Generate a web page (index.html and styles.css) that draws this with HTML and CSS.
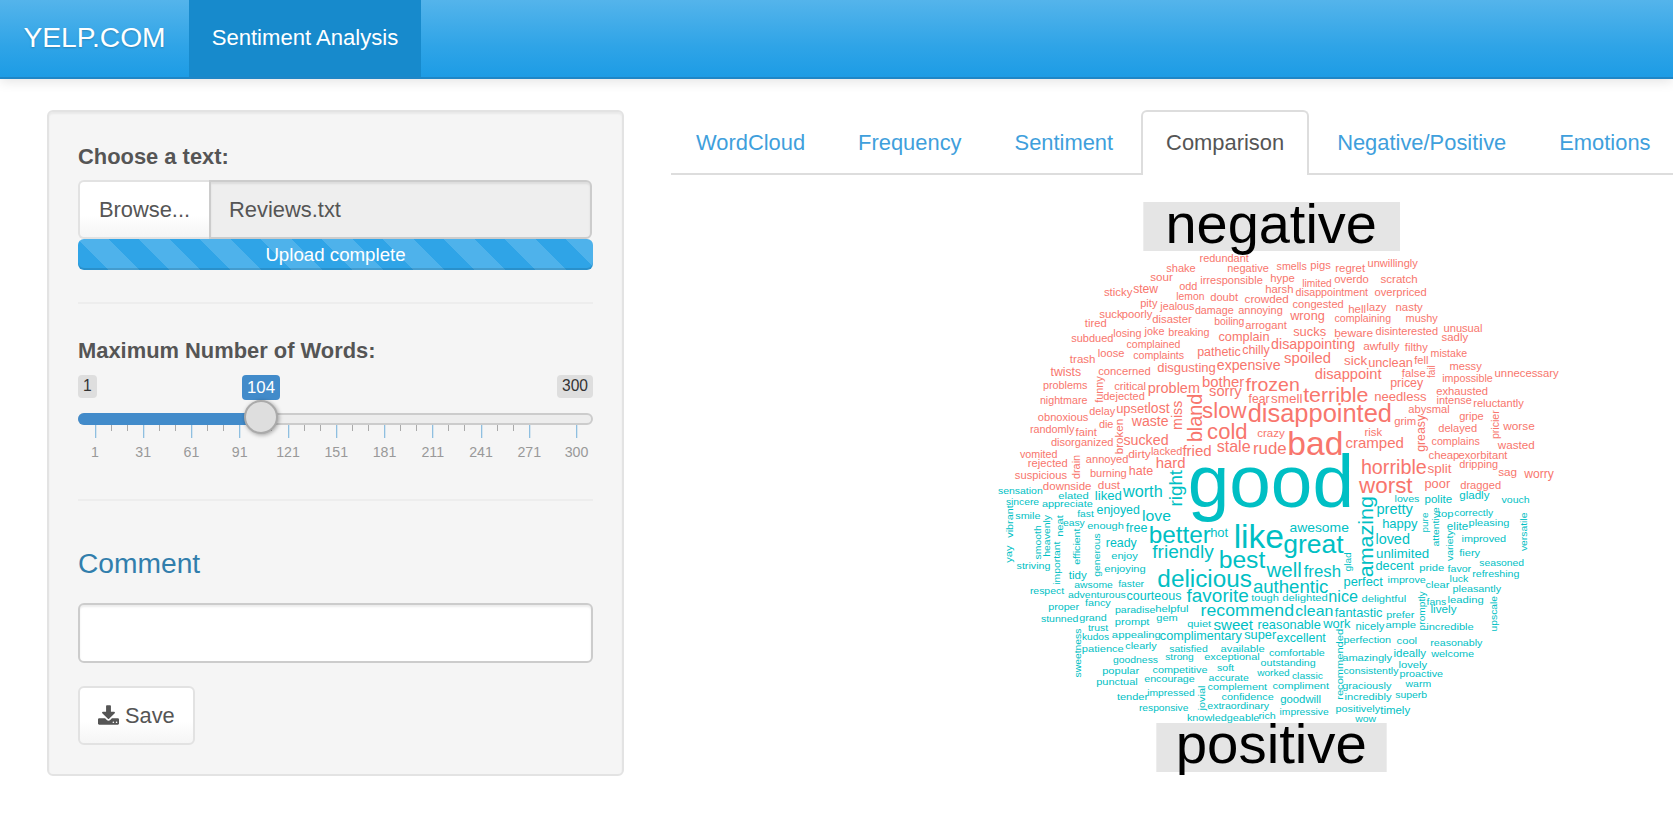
FILE: index.html
```html
<!DOCTYPE html>
<html lang="en">
<head>
<meta charset="utf-8">
<title>Sentiment Analysis</title>
<link rel="stylesheet" href="styles.css">
</head>
<body>
<nav class="navbar">
  <span class="brand">YELP.COM</span>
  <a class="nav-item">Sentiment Analysis</a>
</nav>
<div class="page">
  <aside class="well">
    <label class="field-label">Choose a text:</label>
    <div class="file-group">
      <span class="btn browse">Browse...</span>
      <span class="file-name">Reviews.txt</span>
    </div>
    <div class="progress">Upload complete</div>
    <hr class="rule">
    <label class="field-label words-label">Maximum Number of Words:</label>
    <div class="slider">
      <div class="slider-tags"><span class="tag">1</span><span class="tag">300</span></div>
      <span class="tag current">104</span>
      <div class="track"><div class="fill"></div></div>
      <div class="handle"></div>
      <svg class="scale" width="515" height="40" id="scale"></svg>
    </div>
    <hr class="rule">
    <h3 class="comment-title">Comment</h3>
    <input class="comment" type="text">
    <button class="btn save" type="button">
      <svg class="save-icon" viewBox="0 0 1664 1536"><path d="M1280 1344q0-26-19-45t-45-19-45 19-19 45 19 45 45 19 45-19 19-45zm256 0q0-26-19-45t-45-19-45 19-19 45 19 45 45 19 45-19 19-45zm128-224v320q0 40-28 68t-68 28h-1472q-40 0-68-28t-28-68v-320q0-40 28-68t68-28h465l135 136q58 56 136 56t136-56l136-136h464q40 0 68 28t28 68zm-325-569q17 41-14 70l-448 448q-18 19-45 19t-45-19l-448-448q-31-29-14-70 17-39 59-39h256v-448q0-26 19-45t45-19h256q26 0 45 19t19 45v448h256q42 0 59 39z"/></svg>
      <span>Save</span>
    </button>
  </aside>
  <main class="content">
    <div class="tabs">
      <a class="tab">WordCloud</a>
      <a class="tab">Frequency</a>
      <a class="tab">Sentiment</a>
      <a class="tab active">Comparison</a>
      <a class="tab">Negative/Positive</a>
      <a class="tab">Emotions</a>
    </div>
    <svg class="cloud" id="cloud" viewBox="671 175 1002 658" width="1002" height="658"></svg>
  </main>
</div>
<script src="cloud.js"></script>
</body>
</html>
```
FILE: styles.css
```css
* { box-sizing: border-box; }
html, body { height: 100%; }
body {
  margin: 0;
  background: #fff;
  color: #555;
  font-family: "Liberation Sans", Arial, sans-serif;
  font-size: 21.9px;
  line-height: 31px;
  overflow: hidden;
}
.navbar {
  display: flex;
  height: 79px;
  border-bottom: 2px solid #1f86c6;
  background: linear-gradient(#54b4eb, #2fa4e7 60%, #1d9ce5);
  box-shadow: 0 2px 12px rgba(0, 0, 0, .12);
  color: #fff;
  text-shadow: 0 1px 2px rgba(0, 0, 0, .2);
}
.brand {
  width: 189px;
  padding-left: 23.5px;
  font-size: 28.2px;
  line-height: 75px;
}
.nav-item {
  width: 232px;
  background: #178acc;
  font-size: 22.1px;
  line-height: 75px;
  text-align: center;
  text-shadow: none;
}
.page { display: flex; padding: 31px 0 0 47px; }
.well {
  flex: none;
  width: 577px;
  height: 666px;
  padding: 29px;
  border: 2px solid #e3e3e3;
  border-radius: 6px;
  background: #f5f5f5;
  box-shadow: inset 0 2px 2px rgba(0, 0, 0, .05);
}
.field-label { display: block; height: 39px; font-weight: bold; }
.file-group { display: flex; height: 59px; }
.btn {
  border: 2px solid #e2e2e2;
  border-radius: 6px;
  background: linear-gradient(#fff, #fff 60%, #f5f5f5);
  color: #555;
}
.browse {
  width: 131px;
  border-right: 0;
  border-radius: 6px 0 0 6px;
  line-height: 55px;
  text-align: center;
}
.file-name {
  width: 383px;
  padding-left: 18px;
  border: 2px solid #ccc;
  border-radius: 0 6px 6px 0;
  background: #eee;
  box-shadow: inset 0 2px 2px rgba(0, 0, 0, .075);
  line-height: 55px;
}
.progress {
  height: 31px;
  border-radius: 6px;
  background: linear-gradient(45deg, rgba(255,255,255,.15) 25%, transparent 25%, transparent 50%, rgba(255,255,255,.15) 50%, rgba(255,255,255,.15) 75%, transparent 75%) 0 0 / 61px 61px #2fa4e7;
  box-shadow: inset 0 -2px 0 rgba(0, 0, 0, .12);
  color: #fff;
  font-size: 18.7px;
  line-height: 31px;
  text-align: center;
}
.rule { height: 2px; margin: 32px 0; border: 0; background: #ededed; }
.rule + .words-label { height: 40px; margin-top: -1px; }
.slider { position: relative; height: 92px; }
.slider-tags { display: flex; justify-content: space-between; }
.tag {
  height: 23px;
  padding: 0 5px;
  border-radius: 4px;
  background: #dedede;
  color: #333;
  font-size: 15.6px;
  line-height: 22px;
}
.current {
  position: absolute;
  left: 164px;
  top: 0;
  width: 38px;
  height: 25px;
  background: #428bca;
  color: #fff;
  font-size: 16.8px;
  line-height: 26px;
}
.track {
  height: 12px;
  margin-top: 15px;
  border: 2px solid #ccc;
  border-radius: 8px;
  background: #ededed;
}
.fill {
  width: 184px;
  height: 12px;
  margin: -2px 0 0 -2px;
  border-radius: 8px 0 0 8px;
  background: #428bca;
}
.handle {
  position: absolute;
  left: 166px;
  top: 25px;
  width: 34px;
  height: 34px;
  border: 2px solid #aaa;
  border-radius: 50%;
  background: #dedede;
  box-shadow: 1px 1px 4px rgba(0, 0, 0, .35);
}
.scale { display: block; overflow: visible; font-size: 14.2px; }
.scale text { fill: #999; text-anchor: middle; }
.comment-title {
  margin: 47px 0 24px;
  color: #317eac;
  font-size: 28.2px;
  font-weight: normal;
  line-height: 31px;
}
.comment {
  display: block;
  width: 515px;
  height: 60px;
  border: 2px solid #ccc;
  border-radius: 6px;
  background: #fff;
  box-shadow: inset 0 2px 2px rgba(0, 0, 0, .075);
}
.save {
  display: flex;
  align-items: center;
  gap: 6px;
  width: 117px;
  height: 59px;
  margin-top: 23px;
  padding: 0 18px;
  font: 21.8px "Liberation Sans", Arial, sans-serif;
}
.save-icon { width: 21px; height: 20px; margin-top: -2px; fill: #555; }
.content { width: 1002px; margin-left: 47px; }
.tabs {
  display: flex;
  gap: 3px;
  height: 65px;
  border-bottom: 2px solid #ddd;
}
.tab {
  flex: none;
  height: 65px;
  padding: 0 23px;
  border: 2px solid transparent;
  border-bottom: 0;
  color: #3f9fdc;
  line-height: 61px;
}
.active {
  border-color: #ddd;
  border-radius: 6px 6px 0 0;
  background: #fff;
  color: #555;
}
.cloud { display: block; }
.plate { fill: #e5e5e5; }
.neg { fill: #f8766d; }
.pos { fill: #00bfc4; }
.heading { fill: #000; }
```
FILE: cloud.js
```js
const NS = "http://www.w3.org/2000/svg";
const FAMILY = '"Liberation Sans", Arial, sans-serif';
const pen = document.createElement("canvas").getContext("2d");
pen.font = "100px " + FAMILY;

function add(parent, name, attrs, text) {
  const el = document.createElementNS(NS, name);
  for (const key in attrs) el.setAttribute(key, attrs[key]);
  if (text) el.textContent = text;
  parent.appendChild(el);
  return el;
}

// Each block: origin, class, words as "word start end baseline" in thirds of a pixel.
// A leading "|" marks an upright word: "|word bottom top baselineX".
const blocks = [
  [980, 190, "neg", `redundant 660 805 216;shake 560 646 246;negative 743 865 246;smells 891 979 239;sour 512 577 272;irresponsible 662 847 281;hype 872 943 276;odd 599 651 300;harsh 857 939 308;sticky 373 456 317;stew 461 533 308;lemon 590 672 330;doubt 692 773 332;crowded 795 925 338;pity 482 531 349;jealous 542 642 359;damage 646 760 371;annoying 776 907 371;suck 359 427 384;poorly 427 516 384;disaster 518 634 398;tired 316 379 411;boiling 704 792 404;arrogant 797 919 416;losing 401 483 441;joke 495 552 435;breaking 566 687 438`],
  [1270, 190, "neg", `pigs 122 181 237;regret 197 284 245;unwillingly 294 442 231;limited 98 184 290;overdo 194 295 278;scratch 333 442 278;disappointment 78 293 317;overpriced 315 469 317;congested 69 220 353;hell 236 287 368;lazy 291 348 362;nasty 378 457 362;wrong 62 163 389;complaining 195 362 395;mushy 408 502 395;sucks 71 167 438;beware 194 308 441;disinterested 318 503 435;unusual 522 636 425;sadly 516 593 453`],
  [980, 330, "neg", `subdued 275 399 35;complained 441 600 53;complain 717 867 32;complaints 461 611 86;loose 355 432 80;trash 271 345 98;pathetic 653 781 77;chilly 788 868 71;disgusting 533 706 126;expensive 712 900 118;twists 213 302 137;concerned 356 511 135;problems 190 321 177;nightmare 181 321 221;critical 404 497 179;|funny 217 140 368;dejected 371 493 210;problem 505 658 188;bother 668 791 170;sorry 689 783 198;frozen 799 957 181;delay 329 404 254;upset 410 502 247;lost 505 567 249;obnoxious 175 324 272;die 358 399 294;randomly 151 282 308;faint 288 349 316;|broken 371 268 430;waste 457 564 286;|miss 298 214 606;|bland 334 194 666;slow 669 797 264;cold 684 800 325;disorganized 214 399 346;sucked 432 564 343;dirty 446 511 382;lacked 514 606 375;fried 609 693 376;stale 712 810 364;rude 821 918 370;vomited 121 231 382;rejected 145 262 410;|drain 446 376 300;annoyed 319 444 398;hard 529 615 412;burning 331 439 439;hate 448 518 433;suspicious 106 260 445;downside 190 333 479;dust 355 419 475;fear 807 867 218;smell 875 966 217;crazy 833 913 319;disappointed 806 1233 274`],
  [1270, 330, "neg", `disappointing 5 254 57;awfully 281 387 59;filthy 406 472 61;mistake 483 590 80;spoiled 44 181 99;sick 224 290 104;unclean 296 427 110;fell 434 474 101;messy 540 634 119;|fail 143 107 495;false 397 466 139;impossible 518 667 156;unnecessary 675 865 139;disappoint 136 333 147;pricey 362 458 171;terrible 102 293 215;needless 314 468 212;exhausted 500 653 194;intense 501 604 221;reluctantly 611 760 229;abysmal 416 538 247;gripe 569 640 268;|pricier 326 242 688;grim 374 437 284;|greasy 364 256 464;delayed 506 620 305;worse 701 793 299;risk 285 335 318;bad 56 216 374;cramped 228 400 354;complains 486 628 344;wasted 685 793 356;cheap 477 567 386;exorbitant 567 711 386;horrible 275 468 431;split 474 543 427;dripping 569 683 413;sag 686 740 437;worry 764 850 443;worst 270 425 489;poor 465 539 474;dragged 572 692 475`],
  [980, 330, "pos", `good 632 1113 530;sensation 55 187 490;elated 236 325 506;liked 346 424 508;worth 431 546 500`],
  [980, 475, "pos", `sincere 79 176 89;appreciate 187 337 96;|vibrant 187 92 99;smile 107 180 132;fast 293 340 125;enjoyed 351 478 116;love 488 571 136;|smooth 252 152 183;|heavenly 244 121 211;|neat 184 122 250;easy 250 313 151;enough 323 430 160;free 439 501 171;|right 92 -13 605;better 509 690 204;hot 692 743 186;like 765 908 218;|yay 262 212 95;striving 111 210 282;|important 328 201 241;|efficient 268 162 299;|generous 304 176 361;ready 379 469 215;enjoy 395 472 251;friendly 519 699 248;best 719 853 279;enjoying 374 496 290;tidy 268 319 311;awsome 284 397 337;faster 416 491 335;delicious 535 813 335;respect 151 251 357;adventurous 265 436 368;courteous 441 603 375;favorite 622 804 379;authentic 821 1043 352;tough 815 895 378;proper 206 296 405;fancy 316 391 393;paradise 406 525 413;helpful 527 624 411;recommend 664 940 423;stunned 184 294 441;grand 299 379 437;prompt 406 507 449;gem 530 592 438;quiet 623 692 454;sweet 702 817 465;reasonable 834 1021 462;trust 325 383 467;kudos 307 386 495;appealing 397 541 489;complimentary 541 784 495;super 794 887 492`],
  [1270, 475, "pos", `loves 375 447 80;polite 465 545 83;gladly 569 657 70;vouch 696 778 83;|amazing 304 66 310;pretty 321 427 116;happy 338 441 158;|pure 171 114 473;|attentive 213 98 506;top 505 549 124;correctly 554 668 122;elite 532 593 165;pleasing 597 717 153;|versatile 227 114 770;awesome 60 235 171;great 43 218 233;loved 318 418 206;|variety 257 167 550;improved 576 707 200;unlimited 320 476 247;fiery 569 629 242;|glad 288 233 243;seasoned 629 761 272;fresh 103 211 305;well -8 93 304;decent 318 430 283;pride 449 521 287;favor 534 602 290;refreshing 608 747 305;perfect 222 337 333;improve 354 466 324;clear 468 537 338;luck 540 594 320;pleasantly 549 692 350;delighted 38 172 378;nice 177 262 380;delightful 276 407 381;|promptly 465 350 464;fans 471 527 389;leading 534 640 384;clean 78 188 423;fantastic 196 336 424;prefer 350 432 428;lively 483 558 414;|upscale 468 364 681;work 161 240 458;nicely 258 342 464;ample 348 437 459;incredible 470 610 464;excellent 21 166 500`],
  [1060, 620, "pos", `|sweetness 171 27 63;patience 67 190 95;clearly 197 289 87;satisfied 329 442 95;available 483 613 95;comfortable 628 793 107;goodness 160 293 128;strong 317 400 118;exceptional 434 598 118;outstanding 603 766 137;popular 128 236 161;competitive 279 441 159;soft 472 521 152;worked 593 688 167;classic 697 788 176;punctual 110 232 194;encourage 254 403 185;accurate 447 565 182;complement 444 620 209;compliment 639 806 206;tender 172 263 240;impressed 263 403 227;|jovial 270 198 435;confidence 486 640 240;goodwill 662 782 248;responsive 238 384 272;extraordinary 443 626 267;impressive 660 805 284;knowledgeable 382 597 303;rich 597 646 296`],
  [1270, 620, "pos", `perfection 222 362 69;cool 381 440 71;reasonably 482 636 77;|recommended 238 28 219;amazingly 218 365 122;ideally 372 467 110;welcome 485 611 110;lovely 387 470 144;consistently 222 384 161;proactive 390 518 170;graciously 218 363 206;warm 408 482 199;incredibly 225 363 240;superb 377 470 233;positively 198 329 276;timely 332 419 281;wow 257 317 305`],
  [980, 190, "heading", `negative 563 1184 158`],
  [1060, 620, "heading", `positive 354 914 428`]
];

const cloud = document.getElementById("cloud");
add(cloud, "rect", { class: "plate", x: 1143.3, y: 202, width: 256.7, height: 49 });
add(cloud, "rect", { class: "plate", x: 1156.3, y: 723, width: 230.4, height: 49 });

for (const [ox, oy, cls, words] of blocks) {
  for (const item of words.split(";")) {
    let [word, a, b, base] = item.split(" ");
    const upright = word[0] === "|";
    if (upright) word = word.slice(1);
    const natural = pen.measureText(word).width / 100;
    const em = Math.abs(b - a) / 3 / (natural - 0.08);
    let size = em * 0.98;
    if (cls === "pos" && em < 11.3) size = Math.min(em, 9.8);
    if (cls === "neg" && em < 11.8) size = 10.6;
    const x = upright ? ox + base / 3 : ox + a / 3 - em * 0.04;
    const y = upright ? oy + a / 3 + em * 0.04 : oy + base / 3 + 0.3;
    const attrs = {
      class: cls, x, y, "font-size": size,
      textLength: natural * em, lengthAdjust: "spacingAndGlyphs"
    };
    if (upright) attrs.transform = `rotate(-90 ${x} ${y})`;
    add(cloud, "text", attrs, word);
  }
}

// Slider scale: labelled ticks with two minor ticks in each gap.
const scale = document.getElementById("scale");
const marks = [1, 31, 61, 91, 121, 151, 181, 211, 241, 271, 300];
marks.forEach((value, i) => {
  const x = i < 10 ? 16.5 + i * 48.25 : 498;
  add(scale, "rect", { x: Math.round(x), y: 0, width: 1.3, height: 13, fill: "#8fbfe0" });
  add(scale, "text", { x: x + 0.5, y: 31.5 }, String(value));
  if (i < 9) for (const k of [1, 2])
    add(scale, "rect", { x: Math.round(x + k * 16.1), y: 0, width: 1, height: 6, fill: "#aaa" });
});
```
